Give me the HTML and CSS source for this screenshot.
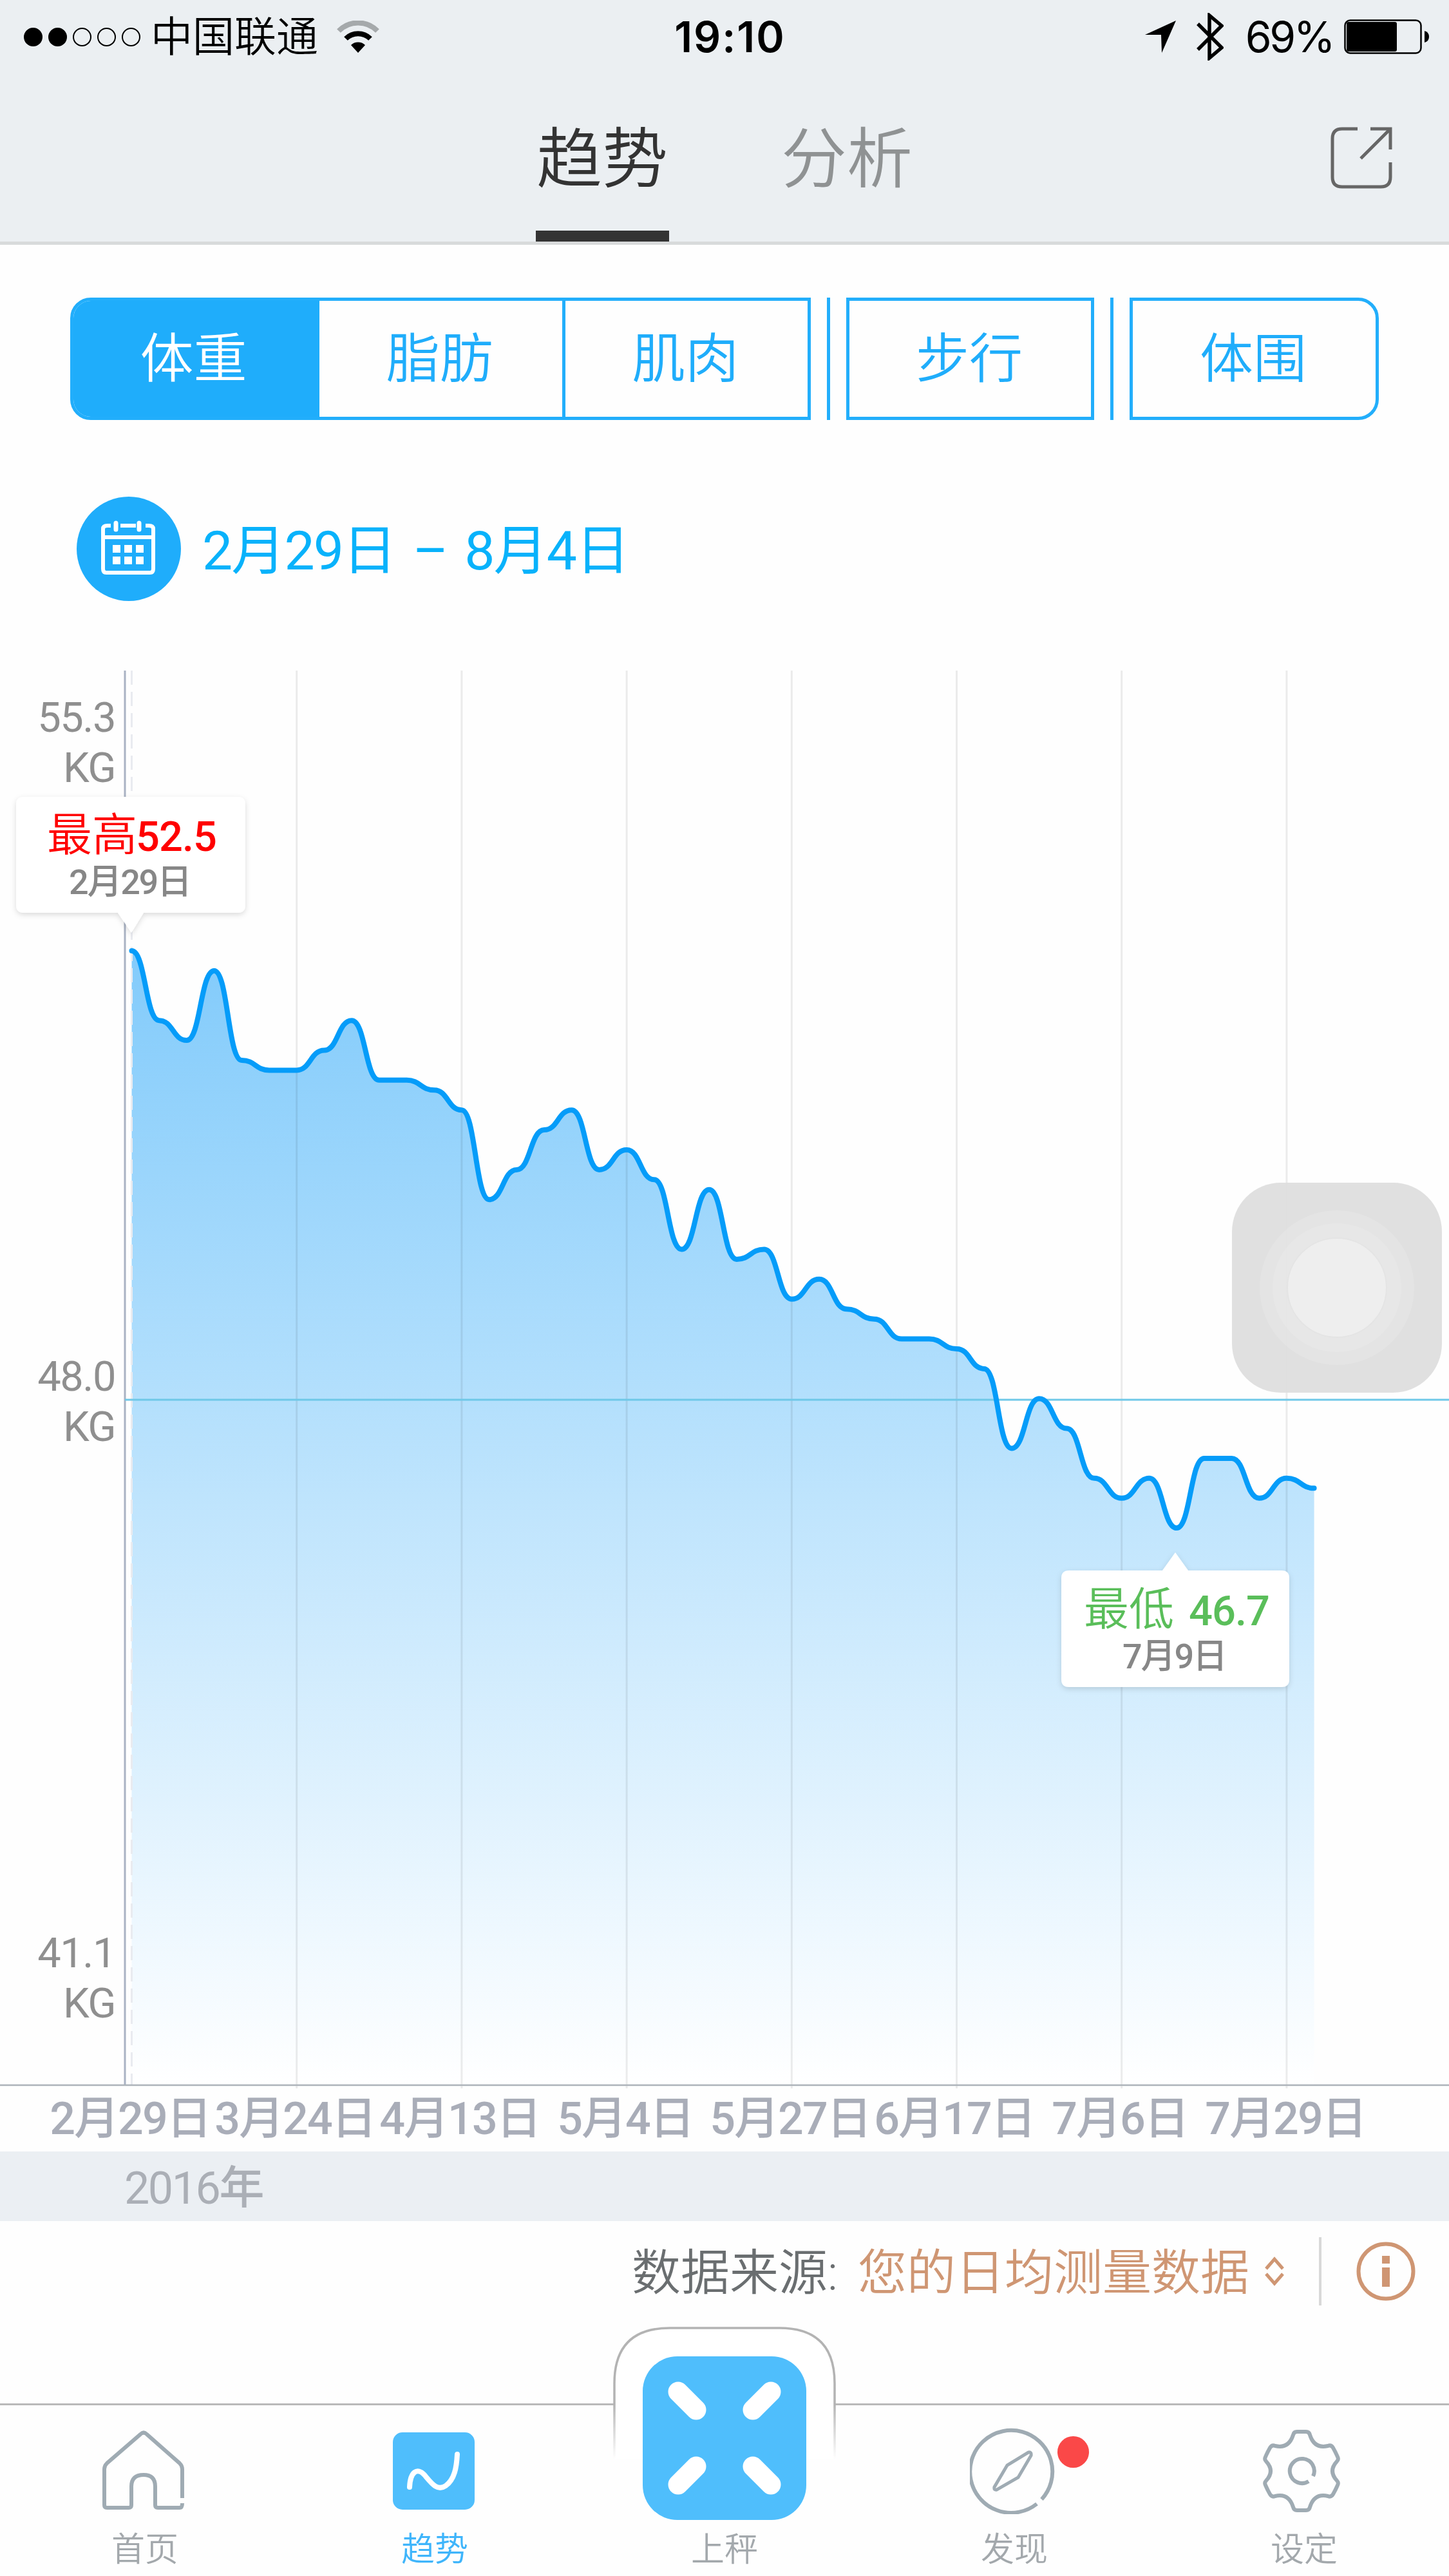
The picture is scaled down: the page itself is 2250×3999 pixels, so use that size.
FILE: index.html
```html
<!DOCTYPE html>
<html lang="zh-CN">
  <head>
    <meta charset="utf-8">
    <title>趋势</title>
    <link rel="stylesheet" href="styles.css">
  </head>
  <body>
    <header class="header">
      <div class="status">
        <div class="status-left">
          <div class="signal">
            <i class="on"></i><i class="on"></i><i></i><i></i><i></i>
          </div>
          <span class="carrier">中国联通</span>
          <svg class="wifi" width="66" height="50" viewBox="0 0 66 50">
            <path d="M3 16 A42 42 0 0 1 63 16" fill="none" stroke="#a5a9ab" stroke-width="8"/>
            <path d="M14 28 A27 27 0 0 1 52 28" fill="none" stroke="#000" stroke-width="8"/>
            <path d="M33 50 L22 38 A16 16 0 0 1 44 38 Z"/>
          </svg>
        </div>
        <span class="time">19:10</span>
        <div class="status-right">
          <svg width="48" height="50" viewBox="0 0 48 50"><path d="M48 0 L26 50 L25 22 L0 22 Z"/></svg>
          <svg class="bluetooth" width="42" height="74" viewBox="0 0 42 74">
            <path d="M2 17 L39 54 L20 70 V4 L39 20 L2 57" fill="none" stroke="#000" stroke-width="5.500"/>
          </svg>
          <span class="percent">69%</span>
          <svg class="battery" width="133" height="54" viewBox="0 0 133 54">
            <rect x="1.5" y="1.5" width="118" height="51" rx="8" fill="none" stroke="#000" stroke-width="2.5"/>
            <rect x="4" y="4" width="78" height="46" rx="3"/>
            <path d="M125 18 Q132 20 132 27 Q132 34 125 36 Z"/>
          </svg>
        </div>
      </div>
      <nav class="tabs">
        <a class="tab active">趋势</a>
        <a class="tab">分析</a>
        <svg class="share" width="96" height="96" viewBox="0 0 96 96">
          <path d="M42 3 H18 Q3 3 3 18 V78 Q3 93 18 93 H78 Q93 93 93 78 V55 M62 3 H93 V35 M93 3 L47 49" fill="none" stroke="#666" stroke-width="5"/>
        </svg>
      </nav>
    </header>

    <div class="segments">
      <div class="group">
        <div class="seg selected">体重</div>
        <div class="seg">脂肪</div>
        <div class="seg">肌肉</div>
      </div>
      <div class="bar"></div>
      <div class="group single">
        <div class="seg">步行</div>
      </div>
      <div class="bar"></div>
      <div class="group last">
        <div class="seg">体围</div>
      </div>
    </div>

    <div class="range">
      <svg width="162" height="162" viewBox="0 0 162 162">
        <circle cx="81" cy="81" r="81" fill="#1fadfb"/>
        <path d="M53 45 H48 Q41 45 41 50 V112 Q41 118 46 118 H114 Q119 118 119 112 V50 Q119 45 112 45 H107 M68 45 H92 M41 63 H119" fill="none" stroke="#fff" stroke-width="6"/>
        <path d="M61 41 V51 M97 41 V51" stroke="#fff" stroke-width="7" stroke-linecap="round"/>
        <path d="M56 75h12v12h-12z M74 75h12v12h-12z M92 75h12v12h-12z M56 93h12v12h-12z M74 93h12v12h-12z M92 93h12v12h-12z" fill="#fff"/>
      </svg>
      <span class="range-text">2月29日 – 8月4日</span>
    </div>

    <svg class="chart" width="2250" height="2299" viewBox="0 0 2250 2299">
      <defs>
        <linearGradient id="fade" gradientUnits="userSpaceOnUse" x1="0" y1="435" x2="0" y2="2196">
          <stop offset="0" stop-color="#82cbfb"/>
          <stop offset="1" stop-color="#ffffff"/>
        </linearGradient>
        <filter id="shadow" x="-10%" y="-10%" width="120%" height="130%">
          <feDropShadow dx="0" dy="3" stdDeviation="4" flood-color="#000" flood-opacity="0.14"/>
        </filter>
      </defs>
      <path id="area" fill="url(#fade)"/>
      <g id="grid" stroke="#000" stroke-opacity="0.075" stroke-width="3"></g>
      <path d="M204.5 0 V2196" stroke="#e9ebf0" stroke-width="3" stroke-dasharray="22 11"/>
      <path d="M194 0 V2196" stroke="#a9b2c3" stroke-width="3"/>
      <path d="M0 2196 H2250" stroke="#adb3ba" stroke-width="2.5"/>
      <path d="M194 1132 H2250" stroke="#6fc8e8" stroke-width="3"/>
      <path id="line" fill="none" stroke="#059cf9" stroke-width="8" stroke-linecap="round"/>

      <g class="ylabel">
        <text x="179" y="95">55.3</text>
        <text x="179" y="173">KG</text>
        <text x="179" y="1118">48.0</text>
        <text x="179" y="1196">KG</text>
        <text x="179" y="2013">41.1</text>
        <text x="179" y="2091">KG</text>
      </g>

      <g class="xlabel">
        <text x="202" y="2272">2月29日</text>
        <text x="458" y="2272">3月24日</text>
        <text x="714" y="2272">4月13日</text>
        <text x="971" y="2272">5月4日</text>
        <text x="1227" y="2272">5月27日</text>
        <text x="1482" y="2272">6月17日</text>
        <text x="1739" y="2272">7月6日</text>
        <text x="1996" y="2272">7月29日</text>
      </g>

      <path d="M37 196 H369 Q381 196 381 208 V364 Q381 376 369 376 H223 L204 407 L183 376 H37 Q25 376 25 364 V208 Q25 196 37 196 Z" fill="#fff" filter="url(#shadow)"/>
      <text class="tip-title high" x="73" y="280">最高<tspan class="num" x="211">52.5</tspan></text>
      <text class="tip-date" x="107" y="347" textLength="191">2月29日</text>

      <path d="M1660 1397 H1805 L1825 1369 L1845 1397 H1990 Q2002 1397 2002 1409 V1566 Q2002 1578 1990 1578 H1660 Q1648 1578 1648 1566 V1409 Q1648 1397 1660 1397 Z" fill="#fff" filter="url(#shadow)"/>
      <text class="tip-title low" x="1683" y="1482">最低 <tspan class="num" x="1846">46.7</tspan></text>
      <text class="tip-date" x="1743" y="1549" textLength="163">7月9日</text>
    </svg>

    <div class="year"><span class="digits">2016</span>年</div>

    <div class="source">
      <span class="source-label">数据来源:</span>
      <span class="source-value">您的日均测量数据</span>
      <svg class="updown" width="30" height="46" viewBox="0 0 30 46">
        <path d="M2 19 L15 4 L28 19 M2 27 L15 42 L28 27" fill="none" stroke="#cf9673" stroke-width="5"/>
      </svg>
      <div class="divider"></div>
      <svg class="info" width="92" height="92" viewBox="0 0 92 92">
        <circle cx="46" cy="46" r="42.5" fill="none" stroke="#cf9673" stroke-width="6"/>
        <path d="M40 22h12v12h-12z M40 40h12v30h-12z" fill="#cf9673"/>
      </svg>
    </div>

    <footer class="tabbar">
      <a class="item">
        <svg class="home" width="134" height="134" viewBox="0 0 134 134">
          <path d="M127 109 V64 Q127 59 123 55 L72 10 Q67 5 62 10 L10 55 Q6 59 6 64 V120 Q6 124 10 124 H44 Q48 124 48 120 V91 Q48 73 67 73 Q85 73 85 91 V120 Q85 124 89 124 H123 Q127 124 127 117" fill="none" stroke="#9fabb3" stroke-width="6"/>
        </svg>
        首页
      </a>
      <a class="item current">
        <svg width="134" height="134" viewBox="0 0 134 134">
          <rect x="2" y="7" width="127" height="120" rx="15" fill="#4fbefc"/>
          <path d="M28 92 C29 68 40 61 51 73 C62 86 71 99 84 90 C98 80 101 61 102 41" fill="none" stroke="#fff" stroke-width="8" stroke-linecap="round"/>
        </svg>
        趋势
      </a>
      <a class="item">
        <svg class="bump" width="346" height="300" viewBox="0 0 346 300">
          <defs>
            <linearGradient id="edge" gradientUnits="userSpaceOnUse" x1="0" y1="120" x2="0" y2="205">
              <stop offset="0" stop-color="#b3b3b3"/>
              <stop offset="1" stop-color="#b3b3b3" stop-opacity="0"/>
            </linearGradient>
          </defs>
          <path d="M2 205 V88 Q2 2 88 2 H258 Q344 2 344 88 V205" fill="#fff" stroke="url(#edge)" stroke-width="3.5"/>
          <rect x="46" y="46" width="254" height="254" rx="54" fill="#4fbefc"/>
          <path d="M101 101 L129 129 M245 101 L217 129 M101 245 L129 217 M245 245 L217 217" stroke="#fff" stroke-width="31" stroke-linecap="round"/>
        </svg>
        上秤
      </a>
      <a class="item">
        <svg class="compass" width="134" height="134" viewBox="0 0 134 134">
          <path d="M111.500 111 A64 64 0 1 0 104 118" fill="none" stroke="#9fabb3" stroke-width="6"/>
          <path d="M91 38 L58 58 L38 92 Q37 97 42 96 L75 77 L95 43 Q96 37 91 38 Z" fill="none" stroke="#9fabb3" stroke-width="5"/>
        </svg>
        <i class="dot"></i>
        发现
      </a>
      <a class="item">
        <svg class="gear" width="134" height="134" viewBox="0 0 134 134">
          <path fill="none" stroke="#9fabb3" stroke-width="6" stroke-linejoin="round" d="M57 6 H71 Q76 6 77 11 Q84 33 105 28 Q110 26 113 31 Q117 38 120 45 Q122 49 119 52 Q105 67 119 82 Q122 85 120 89 Q117 96 113 103 Q110 108 105 106 Q84 101 77 123 Q76 128 71 128 H57 Q52 128 51 123 Q44 101 23 106 Q18 108 15 103 Q11 96 8 89 Q6 85 9 82 Q23 67 9 52 Q6 49 8 45 Q11 38 15 31 Q18 26 23 28 Q44 33 51 11 Q52 6 57 6 Z"/>
          <path d="M82 75 A19 19 0 1 0 75 83" fill="none" stroke="#9fabb3" stroke-width="6"/>
        </svg>
        设定
      </a>
    </footer>

    <div class="assistive">
      <div class="ring"><div class="ring mid"><div class="ring core"></div></div></div>
    </div>

    <script src="chart.js"></script>
  </body>
</html>
```
FILE: styles.css
```css
* {
  box-sizing: border-box;
}

body {
  margin: 0;
  width: 2250px;
  height: 3999px;
  background-color: #fefefe;
  font-family: Roboto, "Noto Sans CJK SC", sans-serif;
  font-weight: 350;
  overflow: hidden;
}

svg {
  display: block;
  flex: none;
}

/* header */
.header {
  height: 380px;
  background-color: #ebeff2;
  border-bottom: 5px solid #d8dadb;
}

.status {
  display: grid;
  grid-template-columns: 1fr auto 1fr;
  align-items: center;
  height: 112px;
  padding: 0 30px 0 37px;
  color: #000;
  font-family: Inter, "Noto Sans CJK SC", sans-serif;
  font-size: 66px;
}

.status-left,
.status-right {
  display: flex;
  align-items: center;
}

.status-right {
  justify-content: flex-end;
}

.signal {
  display: flex;
  gap: 9px;
  margin-right: 16px;
}

.signal i {
  width: 29px;
  height: 29px;
  border: 2px solid #000;
  border-radius: 50%;
}

.signal .on {
  background-color: #000;
}

.carrier {
  font-size: 65px;
  font-weight: 350;
  line-height: 114px;
}

.wifi {
  margin-left: 29px;
}

.time {
  margin-left: 10px;
  font-size: 66px;
  font-weight: 600;
  letter-spacing: 2px;
}

.bluetooth {
  margin-left: 32px;
}

.percent {
  margin: 0 17px 0 34px;
  font-size: 66px;
  font-weight: 400;
  letter-spacing: -3.5px;
}

.tabs {
  position: relative;
  display: flex;
  justify-content: center;
  gap: 173px;
  height: 263px;
}

.tab {
  width: 207px;
  padding-top: 66px;
  color: #8f9293;
  font-size: 102px;
  line-height: 140px;
  text-align: center;
}

.tab.active {
  border-bottom: 17px solid #333;
  color: #333;
}

.share {
  position: absolute;
  right: 88px;
  top: 85px;
}

/* segmented control */
.segments {
  display: flex;
  gap: 25px;
  height: 190px;
  margin: 82px 109px 0;
  color: #1fadfb;
  font-size: 83px;
}

.group {
  display: flex;
  width: 385px;
  border: 5px solid #22aefb;
}

.group:first-child {
  width: 1150px;
  border-radius: 32px 0 0 32px;
  overflow: hidden;
}

.group.last {
  width: 387px;
  border-radius: 0 32px 32px 0;
}

.seg {
  flex: 1;
  padding-right: 3px;
  line-height: 182px;
  text-align: center;
}

.seg + .seg + .seg {
  border-left: 5px solid #22aefb;
}

.seg.selected {
  flex: none;
  width: 382px;
  padding-right: 9px;
  background-color: #1fadfb;
  color: #fff;
}

.bar {
  width: 5px;
  background-color: #22aefb;
}

.range {
  display: flex;
  align-items: center;
  margin: 119px 0 108px 119px;
}

.range-text {
  margin-left: 33px;
  padding-bottom: 9px;
  color: #08b2fb;
  font-size: 84px;
  font-weight: 400;
  letter-spacing: -1.9px;
  word-spacing: 8px;
}

/* chart */
.ylabel text {
  fill: #8f8f8f;
  font-size: 65px;
  font-weight: 400;
  letter-spacing: -1.5px;
  text-anchor: end;
}

.xlabel text {
  fill: #a9adb8;
  font-size: 70px;
  font-weight: 500;
  letter-spacing: -2px;
  text-anchor: middle;
}

.tip-title {
  font-size: 70px;
}

.tip-title .num {
  font-size: 65px;
  font-weight: 500;
  letter-spacing: -1px;
}

.high {
  fill: #f00;
}

.low {
  fill: #5abe5a;
}

.tip-date {
  fill: #878787;
  font-size: 54px;
  font-weight: 500;
}

.year {
  height: 108px;
  padding-left: 193px;
  background-color: #ebeff3;
  color: #abafb6;
  font-size: 70px;
  font-weight: 500;
  line-height: 114px;
}

.digits {
  font-weight: 400;
  letter-spacing: -2.5px;
}

.source {
  display: flex;
  align-items: center;
  justify-content: flex-end;
  height: 155px;
  margin-bottom: 128px;
  padding-right: 52px;
  font-size: 76px;
}

.source-label,
.source-value {
  padding-bottom: 7px;
}

.source-label {
  color: #6a6e70;
}

.source-value {
  margin-left: 31px;
  color: #cf9673;
}

.updown {
  margin-left: 24px;
}

.divider {
  width: 4px;
  height: 106px;
  margin: 0 54px;
  background-color: #d8d8d8;
}

/* bottom bar */
.tabbar {
  display: grid;
  grid-template-columns: repeat(5, 1fr);
  grid-template-rows: 265px;
  height: 268px;
  border-top: 3px solid #b9b9b9;
}

.item {
  position: relative;
  display: flex;
  flex-direction: column;
  align-items: center;
  justify-content: flex-end;
  padding-bottom: 3px;
  color: #a3a8ac;
  font-size: 52px;
  line-height: 74px;
}

.item svg {
  margin-bottom: 19px;
}

.item .bump {
  margin-bottom: 10px;
}

.item .home {
  margin-right: 5px;
}

.item .compass {
  margin-right: 5px;
}

.item .gear {
  margin-right: 2px;
}

.current {
  color: #3fb5fb;
}

.dot {
  position: absolute;
  left: 292px;
  top: 48px;
  width: 49px;
  height: 49px;
  border-radius: 50%;
  background-color: #fa4848;
}

/* floating button */
.assistive {
  position: absolute;
  left: 1913px;
  top: 1836px;
  display: flex;
  align-items: center;
  justify-content: center;
  width: 326px;
  height: 326px;
  border-radius: 76px;
  background-color: rgba(222, 222, 222, 0.94);
}

.ring {
  display: flex;
  align-items: center;
  justify-content: center;
  width: 240px;
  height: 240px;
  border-radius: 50%;
  background-color: rgba(255, 255, 255, 0.13);
}

.mid {
  width: 200px;
  height: 200px;
}

.core {
  width: 156px;
  height: 156px;
  background-color: rgba(255, 255, 255, 0.3);
  border: 2px solid #e4e4e4;
}
```
FILE: chart.js
```js
var weights = [
  52.5, 51.8, 51.6, 52.3, 51.4, 51.3, 51.3, 51.5, 51.8, 51.2, 51.2,
  51.1, 50.9, 50.0, 50.3, 50.7, 50.9, 50.3, 50.5, 50.2, 49.5, 50.1,
  49.4, 49.5, 49.0, 49.2, 48.9, 48.8, 48.6, 48.6, 48.5, 48.3, 47.5,
  48.0, 47.7, 47.2, 47.0, 47.2, 46.7, 47.4, 47.4, 47.0, 47.2, 47.1
];

var left = 204.5;
var step = 42.7;
var bottom = 2196;

function getX(i) {
  return left + i * step;
}

function getY(kg) {
  return 435 + (52.5 - kg) * 154.5;
}

// flat tangent at every reading
var d = "M" + getX(0) + " " + getY(weights[0]);
for (var i = 1; i < weights.length; i++) {
  var mid = getX(i) - step / 2;
  d += ` C${mid} ${getY(weights[i - 1])} ${mid} ${getY(weights[i])} ${getX(i)} ${getY(weights[i])}`;
}

document.getElementById("line").setAttribute("d", d);
document.getElementById("area").setAttribute("d", d + ` V${bottom} H${left} Z`);

// one grid line for every sixth reading
var grid = "";
for (var n = 6; n < weights.length; n += 6) {
  grid += `<path d="M${getX(n)} 0 V2201"/>`;
}
document.getElementById("grid").innerHTML = grid;
```
